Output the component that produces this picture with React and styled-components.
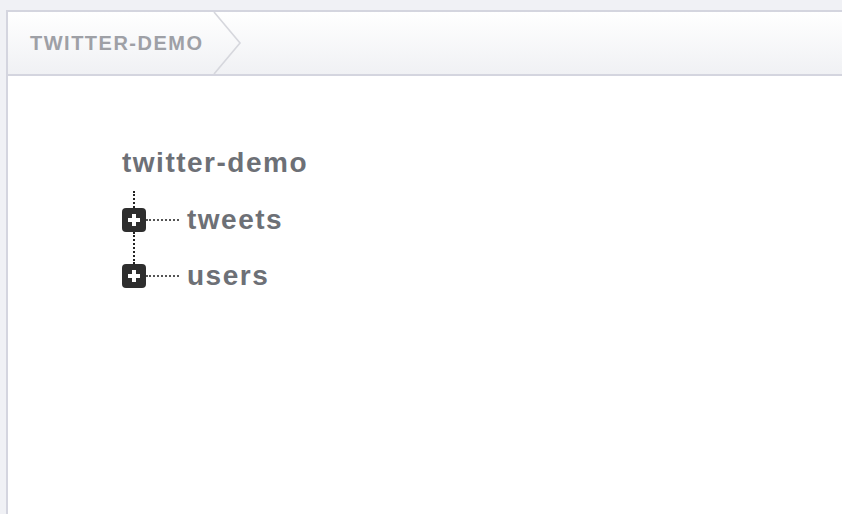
import React from 'react';
import styled, { createGlobalStyle } from 'styled-components';

const GlobalStyle = createGlobalStyle`
  html, body {
    margin: 0;
    padding: 0;
    height: 100%;
    background-color: #f0f1f5;
  }
  #root {
    height: 100%;
  }
`;

const tree = {
  name: 'twitter-demo',
  children: [{ name: 'tweets' }, { name: 'users' }],
};

function PlusIcon() {
  return (
    <svg width="24" height="24" viewBox="0 0 24 24">
      <rect x="0" y="0" width="24" height="24" rx="4" fill="#2e2e2e" />
      <path d="M10 6h4v4h4v4h-4v4h-4v-4H6v-4h4z" fill="#fff" />
    </svg>
  );
}

function Chevron() {
  return (
    <ChevronBox width="30" height="62" viewBox="0 0 30 62">
      <polyline
        points="1,0 27,31 1,62"
        fill="none"
        stroke="#d6d7dd"
        strokeWidth="1.6"
      />
    </ChevronBox>
  );
}

function App() {
  return (
    <Page>
      <GlobalStyle />
      <Panel>
        <Header>
          <Crumb>{tree.name}</Crumb>
          <Chevron />
        </Header>
        <Body>
          <RootLabel>{tree.name}</RootLabel>
          {tree.children.map((child, i) => (
            <Node key={child.name}>
              <Stem $height={i === 0 ? 17 : 32} />
              <Row>
                <Toggle>
                  <PlusIcon />
                </Toggle>
                <Connector />
                <Label>{child.name}</Label>
              </Row>
            </Node>
          ))}
        </Body>
      </Panel>
    </Page>
  );
}

const Page = styled.div`
  height: 100%;
  box-sizing: border-box;
  padding: 10px 0 0 6px;
  display: flex;
`;

const Panel = styled.section`
  flex: 1;
  display: flex;
  flex-direction: column;
  background-color: #fff;
  border-top: 2px solid #d4d5df;
  border-left: 2px solid #d4d5df;
`;

const Header = styled.header`
  display: flex;
  align-items: stretch;
  height: 62px;
  background: linear-gradient(#ffffff, #f0f1f4);
  border-bottom: 2px solid #d4d5df;
`;

const Crumb = styled.div`
  display: flex;
  align-items: center;
  padding: 0 9px 0 22px;
  font-family: 'Liberation Sans', Arial, sans-serif;
  font-weight: 700;
  font-size: 20px;
  letter-spacing: 1.5px;
  text-transform: uppercase;
  color: #9ea0a6;
`;

const ChevronBox = styled.svg`
  display: block;
`;

const Body = styled.div`
  flex: 1;
  padding: 71px 0 0 114px;
  font-family: 'Liberation Sans', Arial, sans-serif;
  font-weight: 700;
  font-size: 28px;
  letter-spacing: 1.5px;
  color: #6d7076;
`;

const RootLabel = styled.div`
  line-height: 32px;
  height: 32px;
  margin-bottom: 12px;
`;

const Node = styled.div`
  display: flex;
  flex-direction: column;
`;

const Stem = styled.div`
  width: 0;
  height: ${({ $height }) => $height}px;
  margin-left: 11px;
  border-left: 2px dotted #222;
`;

const Row = styled.div`
  display: flex;
  align-items: center;
  height: 24px;
`;

const Toggle = styled.div`
  width: 24px;
  height: 24px;
  flex-shrink: 0;

  svg {
    display: block;
  }
`;

const Connector = styled.div`
  width: 33px;
  margin-right: 8px;
  border-top: 2px dotted #555;
`;

const Label = styled.span`
  line-height: 24px;
`;

export default App;
